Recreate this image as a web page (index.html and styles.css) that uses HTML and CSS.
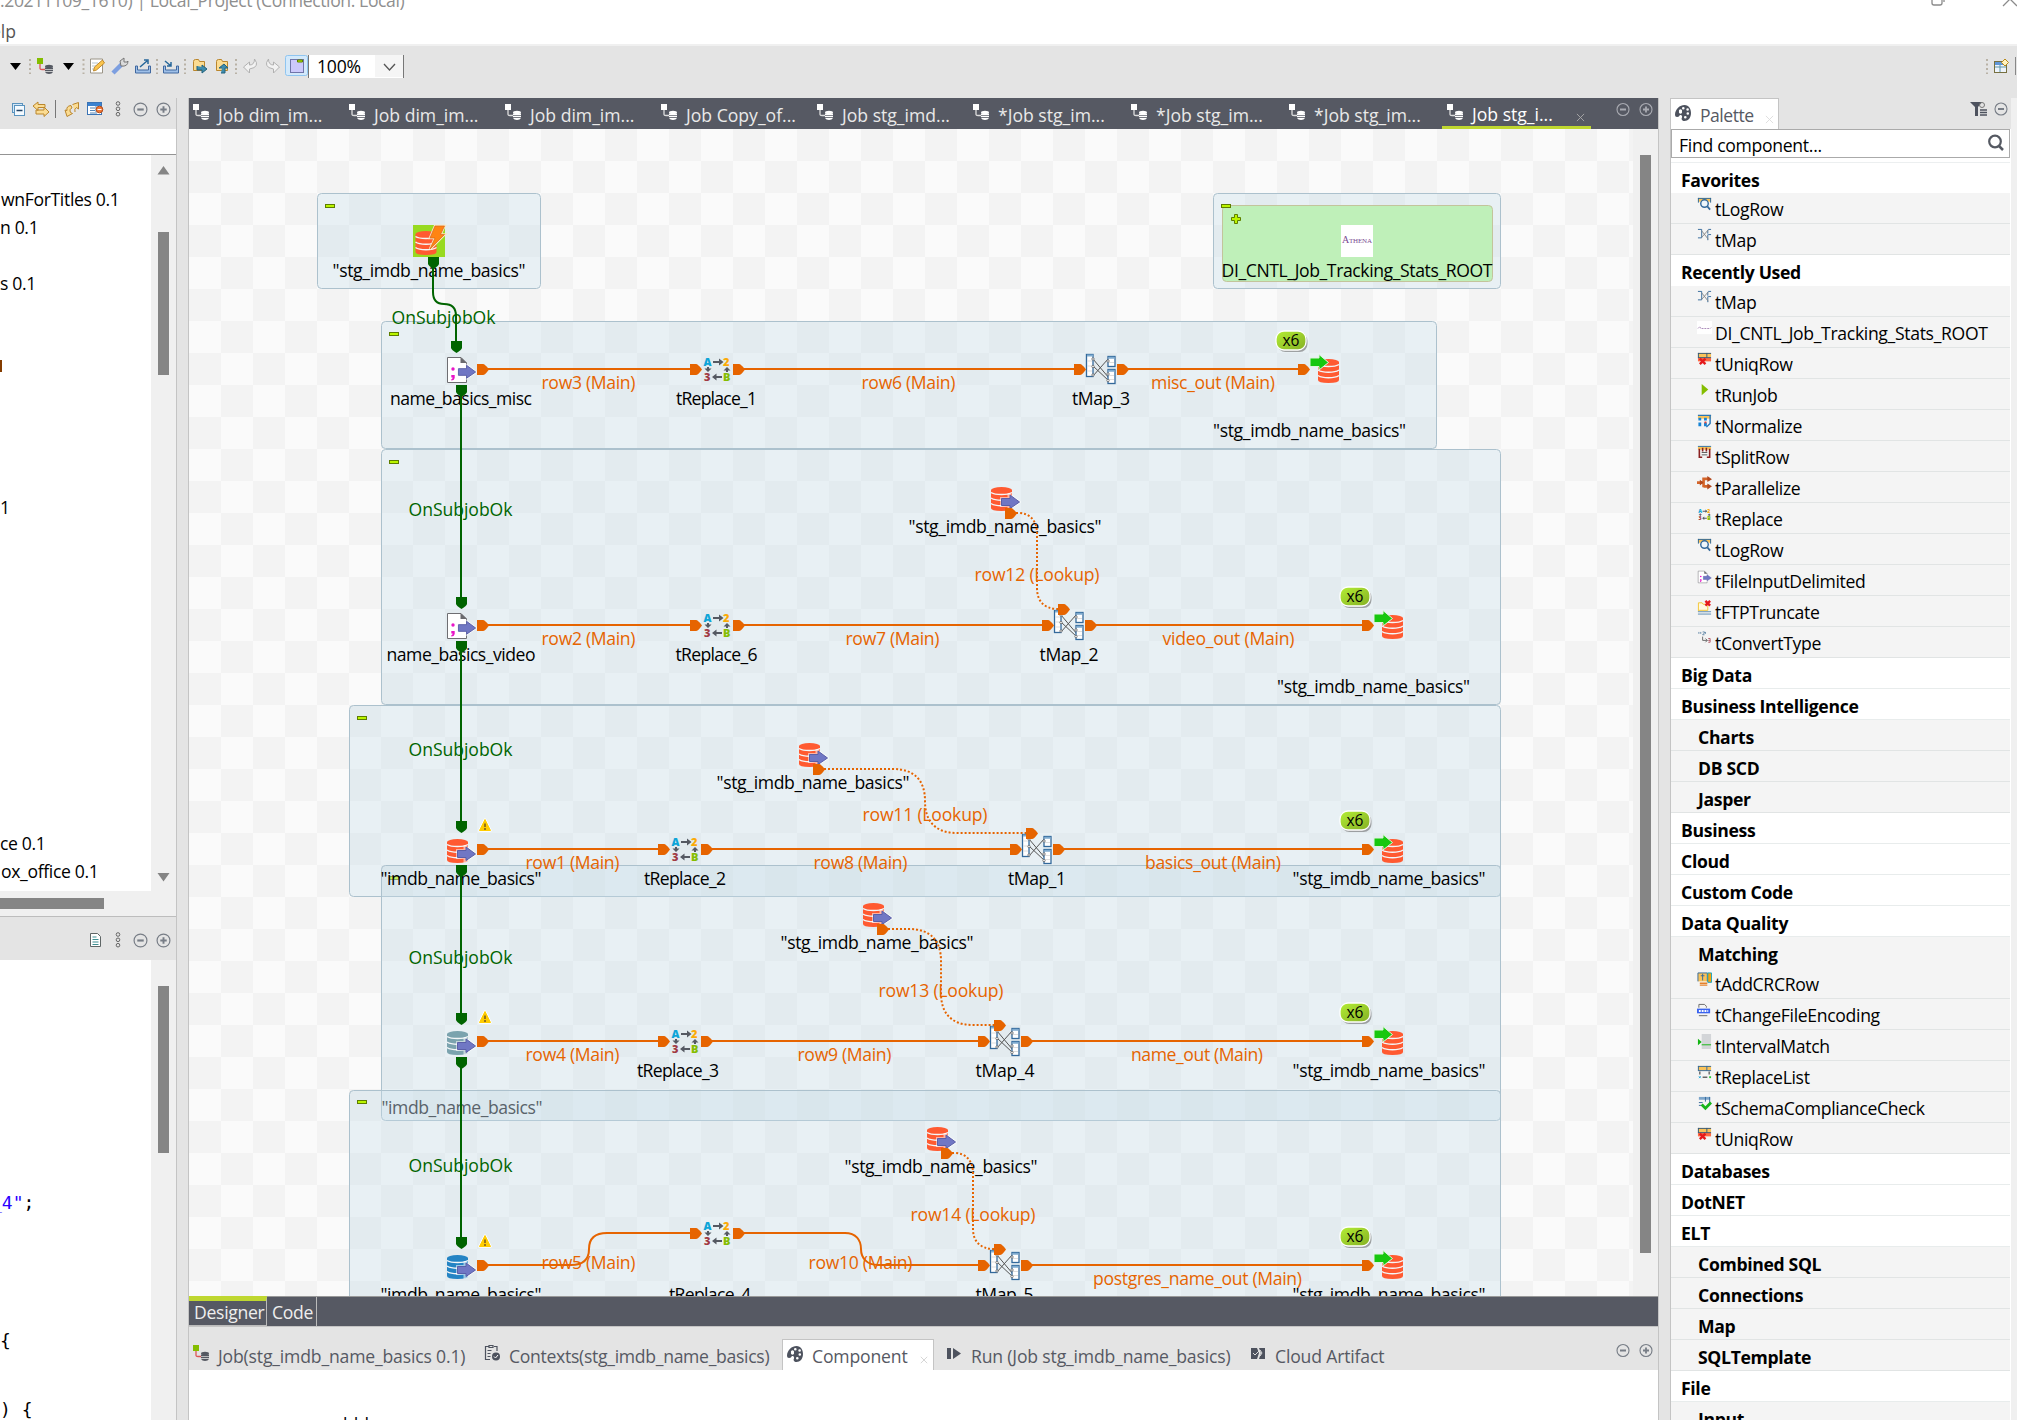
FILE: index.html
```html
<!DOCTYPE html>
<html lang="en">
<head>
<meta charset="utf-8">
<title>Local_Project</title>
<link rel="stylesheet" href="styles.css">
</head>
<body>
<svg class="defs" width="0" height="0">
<defs>
<linearGradient id="badge-fill" x1="0" y1="0" x2="1" y2="1"><stop offset="0" stop-color="#b4ee35"/><stop offset="1" stop-color="#84b024"/></linearGradient>
<symbol id="job" viewBox="0 0 16 16"><rect class="job-a" x="0" y="0" width="6" height="6"/><path class="job-b" d="M3 6V10.500Q3 11.500 5 11.500H8" fill="none"/><g class="job-c"><ellipse cx="12" cy="8.500" rx="4" ry="1.700"/><rect x="8" y="9.500" width="8" height="1.500"/><rect x="8" y="11.700" width="8" height="1.500"/><path d="M8 14h8q-1 2-4 2t-4-2z"/></g></symbol>
<symbol id="minus" viewBox="0 0 14 14"><circle cx="7" cy="7" r="6" fill="none" stroke="currentColor" stroke-width="1.100"/><path d="M4 7h6" stroke="currentColor" stroke-width="2"/></symbol>
<symbol id="plus" viewBox="0 0 14 14"><circle cx="7" cy="7" r="6" fill="none" stroke="currentColor" stroke-width="1.100"/><path d="M4 7h6M7 4v6" stroke="currentColor" stroke-width="1.800"/></symbol>
<symbol id="dots" viewBox="0 0 6 16"><g fill="none" stroke="#666" stroke-width="1"><circle cx="3" cy="2.500" r="1.800"/><circle cx="3" cy="7.800" r="1.800"/><circle cx="3" cy="13.200" r="1.800"/></g></symbol>
<symbol id="palette" viewBox="0 0 16 16"><path fill="#4d525e" fill-rule="evenodd" d="M0 10C0 4 5 0 9.500 0 14 0 16 4 16 8c0 5-3 8-6.500 8C7 16 6 14 7 12.500 7.500 11 6.500 9.500 5 10c-1 1-1 2-3 2Q0 12 0 10zM4 6.500a1.600 1.600 0 1 0 3 0 1.600 1.600 0 1 0-3 0M7 3.200a1.300 1.300 0 1 0 2.600 0 1.300 1.300 0 1 0-2.600 0M11.300 4.500a1.300 1.300 0 1 0 2.600 0 1.300 1.300 0 1 0-2.600 0M11.500 8.500a1.300 1.300 0 1 0 2.600 0 1.300 1.300 0 1 0-2.600 0M9 12.200a1.300 1.300 0 1 0 2.600 0 1.300 1.300 0 1 0-2.600 0"/></symbol>
<symbol id="cross" viewBox="0 0 10 10"><path d="M1 1l8 8M9 1l-8 8" stroke="currentColor" fill="none"/></symbol>
<symbol id="cyl" viewBox="0 0 21 24"><path fill="currentColor" d="M0 3v18q0 3 10.500 3T21 21V3z"/><ellipse cx="10.500" cy="3" rx="10.500" ry="3" fill="currentColor"/><path d="M0 5.500q3 2 10.500 2T21 5.500M0 11q3 2.300 10.500 2.300T21 11M0 16.500q3 2.300 10.500 2.300T21 16.500" fill="none" stroke="#f4f6f8" stroke-width="1.400"/></symbol>
<symbol id="in-arrow" viewBox="0 0 22 18"><path d="M1.500 5.500H9V1.500L19.500 9 9 16V12.500H1.500z" fill="none" stroke="#fff" stroke-opacity=".55" stroke-width="3"/><path d="M1.500 5.500H10V2L19.500 9 10 15.500V12.500H1.500z" fill="#7077c4" stroke="#5a5fa8"/></symbol>
<symbol id="db-in" viewBox="0 0 32 32"><use href="#cyl" x="2" y="6" width="21" height="24"/><use href="#in-arrow" x="11" y="12" width="22" height="18"/></symbol>
<symbol id="file-in" viewBox="0 0 32 32"><path d="M2.500 4.500H16L21.500 10V29.500H2.500z" fill="#fff" stroke="#6e6e72"/><path d="M15.500 4v6H22z" fill="#6a6a6e"/><circle cx="8" cy="16" r="1.700" fill="#e815c8"/><path d="M6.300 22h3.400v3q-.5 2.500-3.400 2.500v-1.200q1.300-.3 1.300-1.800H6.300z" fill="#e815c8"/><use href="#in-arrow" x="12" y="10" width="21" height="18"/></symbol>
<symbol id="db-out" viewBox="0 0 32 32"><g color="#ff5a31"><use href="#cyl" x="9" y="6" width="21" height="24"/></g><path d="M1 5h9V1.500L19.500 9.500 10 17v-3.500H1z" fill="#17c70f" stroke="#dff5dd" stroke-width="1"/></symbol>
<symbol id="replace" viewBox="0 0 32 32"><g font-family="Open Sans,sans-serif" font-weight="800" font-size="11"><text x="2.500" y="12.500" fill="#0ea5d8">A</text><text x="22" y="12.500" fill="#fbaa06">2</text><text x="3" y="28" fill="#a13a44">3</text><text x="22" y="28" fill="#84bd00">B</text></g><g fill="#555962"><path d="M12 8h6V5.500l4.500 3.500-4.500 3.500V10h-6zM21 23h-5.500v-2.500L11 24l4.500 3.500V25H21zM6 14h2v1.500h2.500L7 19l-3.500-3.500H6zM25 19h2v-1.500h2.500L26 14l-3.500 3.500H25z"/></g></symbol>
<symbol id="map" viewBox="0 0 32 32"><path d="M8 6L24 25M8 13L24 28M8 23L23 6" stroke="#555" fill="none"/><g fill="#fff" stroke="#33699b" stroke-width="1.300"><rect x="1.500" y="1.500" width="6.500" height="22"/><rect x="23" y="3.500" width="7" height="10"/><rect x="23" y="16.500" width="7" height="14"/></g><path d="M2 2.500h6M23.500 4.800h6M23.500 17.800h6" stroke="#7eabd0" stroke-width="2"/><path d="M2 8h5M2 13h5M2 18h5M24 9.500h5M24 22.500h5M24 26.500h5" stroke="#ddd"/><g fill="#fff" stroke="#666" stroke-width=".8"><circle cx="8" cy="6" r="1.200"/><circle cx="8" cy="13.500" r="1.200"/><circle cx="8" cy="22" r="1.200"/><circle cx="23" cy="8" r="1.200"/><circle cx="23" cy="21" r="1.200"/><circle cx="23" cy="27.500" r="1.200"/></g></symbol>
<symbol id="warn" viewBox="0 0 14 14"><path d="M7 1.500L12.500 12.500H1.500z" fill="#fc0" stroke="#fff" stroke-width="2.500" stroke-linejoin="round"/><path d="M7 1.500L12.500 12.500H1.500z" fill="#fc0" stroke="#fc0" stroke-linejoin="round"/><path d="M7 5.500v3.500M7 10v2" stroke="#8a6a1c" stroke-width="1.800"/></symbol>
<symbol id="fold" viewBox="0 0 10 4"><rect x=".5" y=".5" width="9" height="3" fill="#baf500" stroke="#5e7d00"/></symbol>
<path id="tip" d="M0-5H6Q8-5 12 .5 8 6 6 6H0z" fill="#e66400"/>
<path id="gtip" d="M-5.500 0H5.500V7Q5 9 0 12-5 9-5.500 7z" fill="#006400"/>
<symbol id="badge" viewBox="0 0 34 24"><rect x="2.500" y="3" width="30" height="19" rx="8" fill="#777" opacity=".65"/><rect x="1" y="1" width="30" height="19" rx="8" fill="url(#badge-fill)" stroke="#fff" stroke-width="1.300"/><text x="16" y="16" text-anchor="middle" textLength="17" lengthAdjust="spacingAndGlyphs" font-family="Open Sans,sans-serif" font-size="17">x6</text></symbol>
<symbol id="i-log" viewBox="0 0 16 16"><path d="M1 1h14v4H1z" fill="#fac35a"/><path d="M1 1.500h14M1.500 1v5M14.500 1v5" stroke="#2b669a" fill="none"/><circle cx="8" cy="7" r="4" fill="#eef6fb" stroke="#33699b" stroke-width="1.500"/><path d="M11 10l3 3.500" stroke="#33699b" stroke-width="1.800"/></symbol>
<symbol id="i-map" viewBox="0 0 16 16"><path d="M1 1.500h4v9H1M12 1.500h3M12 7h3M11.500 2v4M11.500 7v6" stroke="#33699b" fill="none"/><path d="M5 3l7 9M5 10l7-8" stroke="#888" fill="none"/></symbol>
<symbol id="i-athena" viewBox="0 0 16 16"><path d="M0 0h16v14H0z" fill="#fff"/><path d="M1 8l2-2 1 2h10l1-1" fill="none" stroke="#a886b6" stroke-dasharray="2 1"/></symbol>
<symbol id="i-uniq" viewBox="0 0 16 16"><path d="M1 1h14v5H1z" fill="#fac35a"/><path d="M1 6h14v4H1z" fill="#ff6a42"/><path d="M1 1.500h14M1 6h14M1.500 1v5M10.500 1v5" stroke="#33597a" fill="none"/><path d="M3 7l6 6M9 7l-6 6" stroke="#e5191c" stroke-width="2.500"/></symbol>
<symbol id="i-run" viewBox="0 0 16 16"><path d="M5 1l7 6-7 6z" fill="#84bd00"/></symbol>
<symbol id="i-norm" viewBox="0 0 16 16"><path d="M1 1h14v4H1z" fill="#fac35a"/><path d="M1 1.500h14M14 2v8l-4 4" stroke="#2776b8" stroke-width="1.500" fill="none"/><path d="M3 4v3M3 9v4M9 4v3M9 9v4" stroke="#1583d5" stroke-width="3"/><path d="M8 8h2v2H8z" fill="#e43"/></symbol>
<symbol id="i-split" viewBox="0 0 16 16"><path d="M1 1h14v4H1z" fill="#fac35a"/><path d="M1 1.500h14" stroke="#2776b8"/><path d="M2.500 4v9h3M13.500 4v9h-3M6 3v4M10 3v4" stroke="#8a2020" stroke-width="1.700" fill="none"/><path d="M5 8h6M5 10.500h6" stroke="#555"/></symbol>
<symbol id="i-par" viewBox="0 0 16 16"><path d="M0 7h7M7 12V3h6M7 11h6" stroke="#d4652a" stroke-width="2.800" fill="none"/><path d="M11 0l5 3.500-5 3zM11 8l5 3-5 3.500zM3 4l4 3-4 3z" fill="#b3481c"/></symbol>
<symbol id="i-ftp" viewBox="0 0 16 16"><path d="M1.500 12V3h4l1 1.500h5V11H2" fill="#fff8df" stroke="#f3c532"/><path d="M1 12.500h14M1 15h14" stroke="#5b8ab0"/><path d="M9 1l5 5M14 1l-5 5" stroke="#e5191c" stroke-width="2.500"/></symbol>
<symbol id="i-conv" viewBox="0 0 16 16"><path d="M2 1v2M4 1v2M9 1v2M6 1h2v1L6 4h2" stroke="#6287a8" fill="none"/><path d="M6 6v4h5M9 8l2 2-2 2" stroke="#666" fill="none"/><path d="M12 8h2v4h-2M12 10h2" stroke="#b35a66" fill="none"/></symbol>
<symbol id="i-crc" viewBox="0 0 16 16"><path d="M1 1h11v9H1z" fill="#fac35a"/><path d="M1 10V1h10v9M6 2v7M4 4h4" stroke="#33699b" fill="none"/><path d="M11.500 1h4v10h-4z" fill="#f9a30a" stroke="#11a2c4"/><path d="M3 12h8M3 14h8" stroke="#e6822a" stroke-width="1.500"/></symbol>
<symbol id="i-enc" viewBox="0 0 16 16"><path d="M2 5V1.500h6l2 2V5M2 13.500h9" fill="none" stroke="#666"/><path d="M0 6h14v5H0z" fill="#3a63f0"/><path d="M2 8.500h10" stroke="#fff" stroke-width="2" stroke-dasharray="2 1"/></symbol>
<symbol id="i-int" viewBox="0 0 16 16"><path d="M5 0h10v16H5z" fill="#d3d5d8"/><path d="M1 5l4 3.500L1 12z" fill="#12b512"/><path d="M5 11.500h10" stroke="#12b512"/></symbol>
<symbol id="i-rl" viewBox="0 0 16 16"><path d="M1 1h14v5H1z" fill="#fac35a"/><path d="M1 1.500h14M1 6h14M1.500 1v5M10.500 1v5" stroke="#33699b" fill="none"/><path d="M3 7v3M13 7v3M6 13h5" stroke="#666" stroke-width="1.500"/><path d="M2 12l2 2M4 12l-2 2" stroke="#21a5d5"/><path d="M13 13h2" stroke="#2c3" stroke-width="2"/></symbol>
<symbol id="i-schema" viewBox="0 0 16 16"><path d="M2 1h12v3H2z" fill="#7ca5ca"/><path d="M2 10h5M13.500 1v9M9 1v5M2 7h4" stroke="#33699b" fill="none"/><path d="M5 9l4 4 6-6" stroke="#17b51b" stroke-width="3" fill="none"/></symbol>
</defs>
</svg>

<div class="ide">
<header class="window">
  <div class="title">.20211109_1610) | Local_Project (Connection: Local)</div>
  <div class="menu"><span>Help</span></div>
  <svg class="winbtns" width="90" height="8" viewBox="0 0 90 8"><path d="M5 0v3q0 2 2 2h6q2 0 2-2V0M17 0v2" fill="none" stroke="#8b8b8b" stroke-width="1.300"/><path d="M76 6l7-7 7 7" fill="none" stroke="#8b8b8b" stroke-width="1.300"/></svg>
</header>

<div class="toolbar">
  <svg width="308" height="24" viewBox="0 54 308 24">
    <path d="M10 63h11l-5.500 7zM63 63h11l-5.500 7z"/>
    <path d="M30 59v15M83.500 59v15M157 59v15M185 59v15M236 59v15" stroke="#b9b2a6" stroke-width="2" stroke-dasharray="2 2.500"/>
    <use class="job-color" href="#job" x="37" y="58" width="16" height="16"/>
    <path d="M90.500 59h12v14h-12z" fill="#fff" stroke="#9a9487"/><path d="M92 63h6M92 66h5M92 69h3" stroke="#b5c5d0"/><path d="M93.500 71l1-4 8-7 2 3-8 7z" fill="#fbc54c" stroke="#c08a2e"/>
    <path d="M113 73l9-9" stroke="#7d9fe0" stroke-width="4.500"/><path d="M121 66l-1-5 4-3v4h3l1-1q0 6-7 5z" fill="#dadada" stroke="#777"/>
    <g fill="#9fc0e8" stroke="#4068a0"><path d="M135.500 66v7h15v-7h-2v4h-11v-4z"/><path d="M163.500 66v7h15v-7h-2v4h-11v-4z"/></g><path d="M140 67l7-6M144 60h4v4M165 61l6 5M171 62v4h-4" stroke="#27679a" stroke-width="1.500" fill="none"/>
    <g fill="#fbdc92" stroke="#ba862d"><path d="M193.500 61.500q0-2 2-2h3l1 2h5v9h-11z"/><path d="M216.500 61.500q0-2 2-2h3l1 2h5v9h-11z"/></g><path d="M197 66v4h5v3l5-4-5-4v2" fill="#3e8cad" stroke="#23637e"/><path d="M221 73h4v-5h3l-4-4-5 4h3" fill="#3e8cad" stroke="#23637e"/>
    <g fill="#f2f2f2" stroke="#b1b1b1"><path d="M243.500 67l6-5v3q5 0 5-6 6 8-5 10v4z"/><path d="M279.500 67l-6-5v3q-5 0-5-6-6 8 5 10v4z"/></g>
    <rect x="285.500" y="55.500" width="22" height="20" rx="2" fill="#d3e9fb" stroke="#8fc5f0"/><rect x="290.500" y="59.500" width="13" height="13" fill="#ccc9fb" stroke="#7075a8"/><path d="M297.500 60h5v2h-5z" fill="#baf500" stroke="#5e7d00"/>
  </svg>
  <div class="zoom"><span>100%</span><svg width="28" height="22" viewBox="0 0 28 22"><path d="M9 9l5.500 6 5.500-6" fill="none" stroke="#555" stroke-width="1.300"/></svg></div>
  <svg class="persp" width="36" height="24" viewBox="0 54 36 24"><path d="M5 59v15" stroke="#b9b2a6" stroke-width="2" stroke-dasharray="2 2.500"/><rect x="12.500" y="61.500" width="12" height="11" fill="#eef4fc" stroke="#777040"/><path d="M13 62h11v3H13z" fill="#5f96d8"/><path d="M13 67h11M18 65v7" stroke="#5f96a8"/><path d="M23 59l3.500 3.500L23 66l-3.500-3.500z" fill="#fff3c0" stroke="#b88a1c"/><path d="M33.500 57v18" stroke="#888"/></svg>
</div>

<main class="work">
<aside class="left">
  <div class="strip">
    <svg width="176" height="31" viewBox="0 98 176 31"><rect x="12.500" y="103.500" width="10" height="9" fill="#d5e8f8" stroke="#5a93be"/><rect x="14.500" y="105.500" width="10" height="10" fill="#f4faff" stroke="#5a93be"/><path d="M16.500 110.500h6" stroke="#246" stroke-width="1.500"/><path d="M33 106l5-4v2.500h7v3h-7v3zM49 112l-5 4.500v-2.500h-8v-4h8V107z" fill="#fbdc92" stroke="#ba862d"/><path d="M55.500 100v18" stroke="#777"/><path d="M72.500 104.500L78.500 102.500V109L76.500 107.500Q74 109 75 112M71 105.500Q66 106 67 110.500L65 110 67 116.500 72.500 113.500 70.500 112.500Q69 109 72 108z" fill="#fbdc92" stroke="#ba862d"/><rect x="87.500" y="102.500" width="14" height="12" fill="#fff" stroke="#3b74b5"/><path d="M88 104.500h13" stroke="#3b82d0" stroke-width="3"/><path d="M90 108h5M90 110.500h5M90 113h5M96 106v8" stroke="#5585b5"/><circle cx="99.500" cy="109.500" r="3.300" fill="#ef7836" stroke="#b34c1b"/><path d="M97.500 109.500h4" stroke="#fff"/><use href="#dots" x="115" y="101" width="6" height="16"/><g color="#777d86"><use href="#minus" x="133" y="102" width="15" height="15"/><use href="#plus" x="156" y="102" width="15" height="15"/></g></svg>
  </div>
  <div class="filter"></div>
  <div class="tree">
    <ul class="jobs">
      <li class="r1">wnForTitles 0.1</li><li>n 0.1</li><li></li><li>s 0.1</li><li></li><li></li><li class="tick"></li><li></li><li></li><li></li><li></li><li class="one">1</li><li></li><li></li><li></li><li></li><li></li><li></li><li></li><li></li><li></li><li></li><li></li><li>ce 0.1</li><li class="r1">ox_office 0.1</li>
    </ul>
    <svg width="25" height="736" viewBox="151 155 25 736"><path d="M151 155h25v736h-25z" fill="#f0f0f0"/><path d="M158 232h11v143h-11z" fill="#858585"/><path d="M163.500 166l6 8.500h-12zM157.500 873h12l-6 8.500z" fill="#858585"/></svg>
  </div>
  <div class="hscroll"><i></i></div>
  <div class="strip second">
    <svg width="176" height="31" viewBox="0 929 176 31"><path d="M90.500 933.500h7l3 3v10h-10z" fill="#fff" stroke="#5f6666"/><path d="M92.500 937h4M92.500 939.500h6M92.500 942h6M92.500 944.500h6" stroke="#3f8f92"/><use href="#dots" x="115" y="932" width="6" height="16"/><g color="#777d86"><use href="#minus" x="133" y="933" width="15" height="15"/><use href="#plus" x="156" y="933" width="15" height="15"/></g></svg>
  </div>
  <div class="code">
    <pre><b>_4"</b>;





{


) {</pre>
    <div class="vbar"><i></i></div>
  </div>
</aside>

<section class="center">
  <nav class="tabs">
    <div class="tab"><svg><use href="#job"/></svg>Job dim_im...</div>
    <div class="tab"><svg><use href="#job"/></svg>Job dim_im...</div>
    <div class="tab"><svg><use href="#job"/></svg>Job dim_im...</div>
    <div class="tab"><svg><use href="#job"/></svg>Job Copy_of...</div>
    <div class="tab"><svg><use href="#job"/></svg>Job stg_imd...</div>
    <div class="tab wide"><svg><use href="#job"/></svg>*Job stg_im...</div>
    <div class="tab wide"><svg><use href="#job"/></svg>*Job stg_im...</div>
    <div class="tab wide"><svg><use href="#job"/></svg>*Job stg_im...</div>
    <div class="tab active"><svg><use href="#job"/></svg>Job stg_i...<svg class="close"><use href="#cross"/></svg></div>
    <div class="ctl"><svg><use href="#minus"/></svg><svg><use href="#plus"/></svg></div>
  </nav>
  <div class="editor">
  <svg class="canvas" width="1444" height="1167" viewBox="189 129 1444 1167">
    <g class="box">
      <rect x="317.500" y="193.500" width="223" height="95" rx="4"/><rect x="1213.500" y="193.500" width="287" height="95" rx="4"/><rect x="381.500" y="321.500" width="1055" height="127" rx="4"/><rect x="381.500" y="449.500" width="1119" height="255" rx="4"/><rect x="349.500" y="705.500" width="1151" height="191" rx="4"/><rect x="381.500" y="865.500" width="1119" height="255" rx="4"/><rect x="349.500" y="1090.500" width="1151" height="260" rx="4"/>
    </g>
    <rect x="1222.500" y="205.500" width="270" height="76" rx="4" fill="#bff0b9" stroke="#c3c49b"/>
    <use href="#fold" x="325" y="204" width="10" height="4"/><use href="#fold" x="1221" y="204" width="10" height="4"/><use href="#fold" x="389" y="332" width="10" height="4"/><use href="#fold" x="389" y="460" width="10" height="4"/><use href="#fold" x="357" y="716" width="10" height="4"/><use href="#fold" x="389" y="876" width="10" height="4" opacity=".6"/><use href="#fold" x="357" y="1100" width="10" height="4"/>
    <path d="M1234.500 214.500h3v3h3v3h-3v3h-3v-3h-3v-3h3z" fill="#baf500" stroke="#5e7d00"/>

    <g class="lbl">
      <text x="429" y="277" textLength="193">"stg_imdb_name_basics"</text>
      <text x="1357" y="277" textLength="271">DI_CNTL_Job_Tracking_Stats_ROOT</text>
      <text x="461" y="405" textLength="142">name_basics_misc</text><text x="716.500" y="405" textLength="81">tReplace_1</text><text x="1101" y="405" textLength="58">tMap_3</text><text x="1309.500" y="437" textLength="193">"stg_imdb_name_basics"</text>
      <text x="1005" y="533" textLength="193">"stg_imdb_name_basics"</text>
      <text x="461" y="661" textLength="149">name_basics_video</text><text x="716.500" y="661" textLength="82">tReplace_6</text><text x="1069" y="661" textLength="59">tMap_2</text><text x="1373.500" y="693" textLength="193">"stg_imdb_name_basics"</text>
      <text x="813" y="789" textLength="193">"stg_imdb_name_basics"</text>
      <text x="461" y="885" textLength="161">"imdb_name_basics"</text><text x="685" y="885" textLength="82">tReplace_2</text><text x="1037" y="885" textLength="58">tMap_1</text><text x="1389" y="885" textLength="193">"stg_imdb_name_basics"</text>
      <text x="877" y="949" textLength="193">"stg_imdb_name_basics"</text>
      <text x="678" y="1077" textLength="82">tReplace_3</text><text x="1005" y="1077" textLength="59">tMap_4</text><text x="1389" y="1077" textLength="193">"stg_imdb_name_basics"</text>
      <text class="dim" x="462" y="1114" textLength="161">"imdb_name_basics"</text>
      <text x="941" y="1173" textLength="193">"stg_imdb_name_basics"</text>
      <text x="461" y="1301" textLength="161">"imdb_name_basics"</text><text x="710" y="1301" textLength="82">tReplace_4</text><text x="1004.500" y="1301" textLength="58">tMap_5</text><text x="1389" y="1301" textLength="193">"stg_imdb_name_basics"</text>
    </g>
    <g class="lbl or">
      <text x="588.500" y="389" textLength="94">row3 (Main)</text><text x="908.500" y="389" textLength="94">row6 (Main)</text><text x="1213" y="389" textLength="124">misc_out (Main)</text>
      <text x="588.500" y="645" textLength="94">row2 (Main)</text><text x="892.500" y="645" textLength="94">row7 (Main)</text><text x="1228.500" y="645" textLength="132">video_out (Main)</text><text x="1037" y="581" textLength="125">row12 (Lookup)</text>
      <text x="572.500" y="869" textLength="94">row1 (Main)</text><text x="860.500" y="869" textLength="94">row8 (Main)</text><text x="1213" y="869" textLength="136">basics_out (Main)</text><text x="925" y="821" textLength="125">row11 (Lookup)</text>
      <text x="572.500" y="1061" textLength="94">row4 (Main)</text><text x="844.500" y="1061" textLength="94">row9 (Main)</text><text x="1197" y="1061" textLength="132">name_out (Main)</text><text x="941" y="997" textLength="125">row13 (Lookup)</text>
      <text x="588.500" y="1269" textLength="94">row5 (Main)</text><text x="860.500" y="1269" textLength="104">row10 (Main)</text><text x="1197.500" y="1285" textLength="209">postgres_name_out (Main)</text><text x="973" y="1221" textLength="125">row14 (Lookup)</text>
    </g>
    <g class="lbl gr">
      <text x="443.500" y="324" textLength="104">OnSubjobOk</text><text x="460.500" y="516" textLength="104">OnSubjobOk</text><text x="460.500" y="756" textLength="104">OnSubjobOk</text><text x="460.500" y="964" textLength="104">OnSubjobOk</text><text x="460.500" y="1172" textLength="104">OnSubjobOk</text>
    </g>

    <g fill="none" stroke="#e66400" stroke-width="2">
      <path d="M486 369H692M742 369H1076M1126 369H1300M486 625H692M742 625H1044M1094 625H1364M486 849H660M710 849H1012M1062 849H1364M486 1041H660M710 1041H980M1030 1041H1364M1030 1265H1364"/>
      <path d="M486 1265H571C583 1265 589 1259 589 1249S595 1233 607 1233H692M742 1233H845C856 1233 861 1240 861 1249S867 1265 878 1265H980"/>
      <path stroke-dasharray="2 2" d="M1016 513H1018C1030 513 1037 521 1037 533V588C1037 601 1044 609 1058 609M824 769H893C914 769 925 780 925 801S936 833 957 833H1027M888 929H909C930 929 941 940 941 961V993C941 1014 952 1025 973 1025H995M952 1153H954C966 1153 973 1161 973 1173V1229C973 1241 980 1249 994 1249"/>
    </g>
    <g fill="none" stroke="#006400" stroke-width="2"><path d="M433 266V292Q433 304 444 304Q456 304 456 316V343M461 394V600M461 650V824M461 874V1016M461 1066V1240"/></g>

    <rect x="413" y="225" width="32" height="32" fill="#98da20"/><g color="#ff5a31"><use href="#cyl" x="415" y="231" width="22" height="24"/></g><path d="M435 226h9.500l-4 8.500h4L430 249l5-11h-5z" fill="#ff8412" stroke="#fbe6bd" stroke-width="2.500"/><path d="M435 226h9.500l-4 8.500h4L430 249l5-11h-5z" fill="#ff8412" stroke="#d9641c" stroke-width=".7"/>
    <rect x="1341" y="225" width="32" height="32" fill="#fff"/><text class="athena" x="1342" y="243" textLength="30"><tspan class="big">A</tspan>THENA</text>
    <use href="#file-in" x="445" y="353" width="32" height="32"/><use href="#file-in" x="445" y="609" width="32" height="32"/>
    <g color="#ff5a31"><use href="#db-in" x="445" y="833" width="32" height="32"/><use href="#db-in" x="989" y="481" width="32" height="32"/><use href="#db-in" x="797" y="737" width="32" height="32"/><use href="#db-in" x="861" y="897" width="32" height="32"/><use href="#db-in" x="925" y="1121" width="32" height="32"/></g>
    <g color="#7ba3ae"><use href="#db-in" x="445" y="1025" width="32" height="32"/></g><g color="#2484c4"><use href="#db-in" x="445" y="1249" width="32" height="32"/></g>
    <use href="#replace" x="701" y="353" width="32" height="32"/><use href="#replace" x="701" y="609" width="32" height="32"/><use href="#replace" x="669" y="833" width="32" height="32"/><use href="#replace" x="669" y="1025" width="32" height="32"/><use href="#replace" x="701" y="1217" width="32" height="32"/>
    <use href="#map" x="1085" y="353" width="32" height="32"/><use href="#map" x="1053" y="609" width="32" height="32"/><use href="#map" x="1021" y="833" width="32" height="32"/><use href="#map" x="989" y="1025" width="32" height="32"/><use href="#map" x="989" y="1249" width="32" height="32"/>
    <use href="#db-out" x="1309" y="353" width="32" height="32"/><use href="#db-out" x="1373" y="609" width="32" height="32"/><use href="#db-out" x="1373" y="833" width="32" height="32"/><use href="#db-out" x="1373" y="1025" width="32" height="32"/><use href="#db-out" x="1373" y="1249" width="32" height="32"/>
    <use href="#badge" x="1275" y="330" width="34" height="24"/><use href="#badge" x="1339" y="586" width="34" height="24"/><use href="#badge" x="1339" y="810" width="34" height="24"/><use href="#badge" x="1339" y="1002" width="34" height="24"/><use href="#badge" x="1339" y="1226" width="34" height="24"/>
    <use href="#warn" x="478" y="818" width="14" height="14"/><use href="#warn" x="478" y="1010" width="14" height="14"/><use href="#warn" x="478" y="1234" width="14" height="14"/>

    <use href="#tip" x="477" y="369"/><use href="#tip" x="690" y="369"/><use href="#tip" x="733" y="369"/><use href="#tip" x="1074" y="369"/><use href="#tip" x="1117" y="369"/><use href="#tip" x="1298" y="369"/>
    <use href="#tip" x="477" y="625"/><use href="#tip" x="690" y="625"/><use href="#tip" x="733" y="625"/><use href="#tip" x="1042" y="625"/><use href="#tip" x="1085" y="625"/><use href="#tip" x="1362" y="625"/>
    <use href="#tip" x="477" y="849"/><use href="#tip" x="658" y="849"/><use href="#tip" x="701" y="849"/><use href="#tip" x="1010" y="849"/><use href="#tip" x="1053" y="849"/><use href="#tip" x="1362" y="849"/>
    <use href="#tip" x="477" y="1041"/><use href="#tip" x="658" y="1041"/><use href="#tip" x="701" y="1041"/><use href="#tip" x="978" y="1041"/><use href="#tip" x="1021" y="1041"/><use href="#tip" x="1362" y="1041"/>
    <use href="#tip" x="477" y="1265"/><use href="#tip" x="690" y="1233"/><use href="#tip" x="733" y="1233"/><use href="#tip" x="978" y="1265"/><use href="#tip" x="1021" y="1265"/><use href="#tip" x="1362" y="1265"/>
    <use href="#tip" x="1005" y="513"/><use href="#tip" x="1058" y="609"/><use href="#tip" x="813" y="769"/><use href="#tip" x="1026" y="833"/><use href="#tip" x="877" y="929"/><use href="#tip" x="994" y="1025"/><use href="#tip" x="941" y="1153"/><use href="#tip" x="994" y="1249"/>
    <use href="#gtip" x="433.500" y="257"/><use href="#gtip" x="456.500" y="341"/><use href="#gtip" x="461.500" y="385"/><use href="#gtip" x="461.500" y="597"/><use href="#gtip" x="461.500" y="641"/><use href="#gtip" x="461.500" y="821"/><use href="#gtip" x="461.500" y="865"/><use href="#gtip" x="461.500" y="1013"/><use href="#gtip" x="461.500" y="1057"/><use href="#gtip" x="461.500" y="1237"/>
  </svg>
  <div class="edbar"><i></i></div>
  </div>
  <nav class="modes"><span class="on">Designer</span><span>Code</span></nav>
  <nav class="views">
    <div class="v1"><svg class="job-color"><use href="#job"/></svg>Job(stg_imdb_name_basics 0.1)</div>
    <div class="v2"><svg viewBox="0 0 16 16"><path d="M6 14.500H1.500v-13h3M10 1.500h3V6M5 .5h4v2H5zM3.500 5.500h4M3.500 8.500h3M3.500 11.500h3" fill="none" stroke="#4d525e" stroke-width="1.200"/><circle cx="12" cy="11.500" r="4" fill="#4d525e"/><path d="M10 11.500l1.500 1.500 2.500-3" stroke="#fff" fill="none"/></svg>Contexts(stg_imdb_name_basics)</div>
    <div class="v3"><svg><use href="#palette"/></svg>Component<svg class="close"><use href="#cross"/></svg></div>
    <div class="v4"><svg viewBox="0 0 16 16"><path d="M1 3h4v11H1zM7 3l8 5.500L7 14z" fill="#4d525e"/></svg>Run (Job stg_imdb_name_basics)</div>
    <div class="v5"><svg viewBox="0 0 16 16"><path d="M1 3h6l2 5-2 6H1zM9 3h6v11H9l2-6z" fill="#4d525e"/><path d="M3 8l2 2 4-4M10 5l2 3-2 3" fill="none" stroke="#ddd"/></svg>Cloud Artifact</div>
    <div class="ctl"><svg><use href="#minus"/></svg><svg><use href="#plus"/></svg></div>
  </nav>
  <div class="props"><span>ldd</span></div>
</section>

<aside class="right">
  <div class="phead">
    <div class="ptab"><svg class="pi"><use href="#palette"/></svg>Palette<svg class="close"><use href="#cross"/></svg></div>
    <svg class="pctl" width="40" height="18" viewBox="0 0 40 18"><path d="M0 2h12l-4 5v9H5V7z" fill="#4d525e"/><path d="M10 10h7M10 12.500h7M10 15h7" stroke="#4d525e" stroke-width="1.300"/><circle cx="12" cy="5" r="2.500" fill="none" stroke="#777"/><g color="#777d86"><use href="#minus" x="24" y="2" width="14" height="14"/></g></svg>
  </div>
  <div class="find"><span>Find component...</span><svg width="18" height="18" viewBox="0 0 18 18"><circle cx="8" cy="7.500" r="5.800" fill="none" stroke="#555962" stroke-width="2.200"/><path d="M12 12l4 4" stroke="#555962" stroke-width="2.500"/></svg></div>
  <div class="list">
    <div class="h">Favorites</div>
    <div class="c"><svg><use href="#i-log"/></svg>tLogRow</div>
    <div class="c"><svg><use href="#i-map"/></svg>tMap</div>
    <div class="h">Recently Used</div>
    <div class="c"><svg><use href="#i-map"/></svg>tMap</div>
    <div class="c"><svg><use href="#i-athena"/></svg>DI_CNTL_Job_Tracking_Stats_ROOT</div>
    <div class="c"><svg><use href="#i-uniq"/></svg>tUniqRow</div>
    <div class="c"><svg><use href="#i-run"/></svg>tRunJob</div>
    <div class="c"><svg><use href="#i-norm"/></svg>tNormalize</div>
    <div class="c"><svg><use href="#i-split"/></svg>tSplitRow</div>
    <div class="c"><svg><use href="#i-par"/></svg>tParallelize</div>
    <div class="c"><svg><use href="#replace"/></svg>tReplace</div>
    <div class="c"><svg><use href="#i-log"/></svg>tLogRow</div>
    <div class="c"><svg><use href="#file-in"/></svg>tFileInputDelimited</div>
    <div class="c"><svg><use href="#i-ftp"/></svg>tFTPTruncate</div>
    <div class="c"><svg><use href="#i-conv"/></svg>tConvertType</div>
    <div class="h line">Big Data</div>
    <div class="h line">Business Intelligence</div>
    <div class="s">Charts</div>
    <div class="s">DB SCD</div>
    <div class="s">Jasper</div>
    <div class="h line">Business</div>
    <div class="h line">Cloud</div>
    <div class="h line">Custom Code</div>
    <div class="h line">Data Quality</div>
    <div class="s open">Matching</div>
    <div class="c"><svg><use href="#i-crc"/></svg>tAddCRCRow</div>
    <div class="c"><svg><use href="#i-enc"/></svg>tChangeFileEncoding</div>
    <div class="c"><svg><use href="#i-int"/></svg>tIntervalMatch</div>
    <div class="c"><svg><use href="#i-rl"/></svg>tReplaceList</div>
    <div class="c"><svg><use href="#i-schema"/></svg>tSchemaComplianceCheck</div>
    <div class="c"><svg><use href="#i-uniq"/></svg>tUniqRow</div>
    <div class="h line">Databases</div>
    <div class="h line">DotNET</div>
    <div class="h line">ELT</div>
    <div class="s">Combined SQL</div>
    <div class="s">Connections</div>
    <div class="s">Map</div>
    <div class="s">SQLTemplate</div>
    <div class="h line">File</div>
    <div class="s">Input</div>
  </div>
</aside>
</main>
</div>
</body>
</html>
```
FILE: styles.css
```css
* { box-sizing: border-box; }
html, body { margin: 0; height: 100%; overflow: hidden; }
body { font: 17.6px/22px "Open Sans", "Noto Sans", sans-serif; color: #000; background: #e4e4e4; }
.defs { position: absolute; }
svg { display: block; flex: none; }
.ide { width: 2017px; height: 1420px; display: flex; flex-direction: column; overflow: hidden; }

.window { height: 46px; background: #fff; border-bottom: 2px solid #f0f0f0; display: grid; grid-template-columns: 1fr 90px; grid-template-rows: 20px 24px; overflow: hidden; }
.title { color: #8f8f8f; margin-top: -11px; line-height: 22px; white-space: nowrap; letter-spacing: -.4px; }
.menu { grid-row: 2; color: #555; display: flex; justify-content: flex-end; width: 16px; line-height: 22px; }
.winbtns { grid-column: 2; grid-row: 1; }

.toolbar { height: 52px; display: flex; align-items: flex-start; padding-top: 8px; }
.zoom { width: 96px; height: 23px; margin: 1px 0 0; background: #fff; border-left: 1px solid #777; border-right: 1px solid #777; display: flex; justify-content: space-between; padding-left: 8px; line-height: 22px; letter-spacing: -.2px; }
.zoom svg { background: #f5f5f5; }
.persp { margin-left: auto; margin-right: -1px; }

.job-color { --a: #84bd00; --b: #d55; --c: #555962; }
.job-a { fill: var(--a, #fff); }
.job-b { stroke: var(--b, #ddd); stroke-width: 1.3; }
.job-c { fill: var(--c, #fff); }

.work { flex: 1; min-height: 0; display: flex; }
.left { width: 177px; border-right: 1px solid #c4c4c4; display: flex; flex-direction: column; overflow: hidden; flex: none; }
.strip { height: 31px; flex: none; }
.filter { height: 26px; background: #fff; border-bottom: 1px solid #949494; flex: none; }
.tree { height: 736px; display: flex; background: #fff; flex: none; }
.jobs { list-style: none; margin: 0; padding: 30px 0 0; width: 151px; overflow: hidden; letter-spacing: -.35px; white-space: nowrap; }
.jobs li { height: 28px; line-height: 28px; }
.jobs .r1 { padding-left: 1px; }
.jobs .tick { height: 28px; background: linear-gradient(#843c00, #843c00) 0 7px / 2px 12px no-repeat; }
.hscroll { height: 26px; background: #f0f0f0; border-bottom: 1px solid #bdbdbd; padding-top: 7px; flex: none; }
.hscroll i { display: block; width: 104px; height: 11px; background: #858585; }
.second { margin-top: 12px; }
.code { flex: 1; background: #fff; display: flex; }
.code pre { width: 151px; margin: 0; padding: 231px 0 0; text-indent: -9px; font: 18px/23px "DejaVu Sans Mono", monospace; overflow: hidden; }
.code b { color: #2a00ff; font-weight: 400; }
.vbar { width: 25px; background: #f0f0f0; padding: 26px 0 0 7px; }
.vbar i { display: block; width: 11px; height: 167px; background: #858585; }

.center { width: 1471px; margin-left: 11px; border-left: 1px solid #c4c4c4; border-right: 1px solid #c4c4c4; display: flex; flex-direction: column; flex: none; }
.tabs { height: 31px; background: #565963; display: flex; color: #e9e9e9; }
.tab { width: 156px; display: flex; align-items: center; padding-left: 4px; white-space: nowrap; padding-top: 2px; }
.tab svg { width: 16px; height: 16px; margin: -5px 9px 0 0; }
.tab.wide { width: 158px; }
.tab.active { width: 149px; margin-left: -1px; padding: 4px 0 0 5px; border-bottom: 3px solid #bfd730; color: #fff; }
.tab .close { width: 9px; height: 9px; margin: 6px 6px 0 auto; color: #aaa; }
.ctl { margin-left: auto; display: flex; gap: 9px; padding: 4px 5px 0 0; color: #a9abb2; }
.ctl svg { width: 14px; height: 15px; }
.editor { height: 1167px; display: flex; flex: none; }
.canvas { background: conic-gradient(#f3f3f3 25%, #fafafa 0 50%, #f3f3f3 0 75%, #fafafa 0) 0 0 / 64px 64px; }
.edbar { width: 25px; background: #f0f0f0; padding: 26px 0 0 7px; }
.edbar i { display: block; width: 11px; height: 1098px; background: #858585; }
.box rect { fill: rgba(198, 221, 233, .35); stroke: #acc1cd; }
.lbl text { font: 17.6px "Open Sans", sans-serif; text-anchor: middle; fill: #000; }
.lbl .dim { fill: #59636b; }
.lbl.or text { fill: #e66400; }
.lbl.gr text { fill: #006400; }
.athena { font: 7px "Liberation Serif", serif; fill: #7a4a92; }
.athena .big { font-size: 10px; }

.modes { height: 31px; background: #565963; color: #eee; display: flex; border-bottom: 1px solid #c4c4c4; border-top: 1px solid #999; flex: none; letter-spacing: -.3px; }
.modes span { border-right: 1px solid #bbb; padding: 4px 3px 0 5px; }
.modes .on { margin-top: -1px; border-top: 5px solid #bfd730; padding-top: 0; width: 78px; border-bottom: 1px solid #bbb; }
.views { height: 31px; margin-top: 12px; display: flex; color: #565963; white-space: nowrap; letter-spacing: -.17px; flex: none; }
.views > div { display: flex; align-items: center; padding-left: 4px; padding-top: 2px; }
.views svg { width: 16px; height: 16px; margin: -5px 9px 0 0; }
.views .v1 { width: 291px; }
.views .v2 { width: 302px; letter-spacing: -.3px; }
.views .v3 { width: 152px; background: #fff; border: 1px solid #c4c4c4; border-bottom: 0; }
.views .v4 { width: 304px; padding-left: 12px; }
.views .v5 { padding-left: 12px; }
.views .ctl { color: #777d86; align-items: flex-start; padding: 4px 5px 0 0; }
.views .ctl svg { width: 14px; height: 15px; margin: 0; }
.views .close { width: 8px; height: 8px; margin: 8px 5px 0 auto; color: #ccc; }
.props { flex: 1; background: #fff; padding: 43px 0 0 154px; overflow: hidden; }

.right { width: 347px; margin-left: 11px; border-left: 1px solid #c4c4c4; border-right: 6px solid #f0f0f0; flex: none; overflow: hidden; background: #fff; }
.phead { height: 31px; display: flex; justify-content: space-between; background: #e4e4e4; margin-right: -6px; }
.ptab { width: 108px; background: #fff; border: 1px solid #c4c4c4; border-left: 0; border-bottom: 0; display: flex; align-items: center; padding: 2px 0 0 4px; color: #565963; letter-spacing: -.5px; }
.pi { width: 16px; height: 16px; margin: -4px 9px 0 0; }
.ptab .close { width: 9px; height: 9px; margin: 8px 4px 0 auto; color: #ddd; }
.pctl { margin: 2px 7px 0 0; }
.find { height: 29px; width: 339px; border: 1px solid #aaa; display: flex; justify-content: space-between; padding: 4px 4px 0 7px; line-height: 22px; letter-spacing: -.3px; }
.list { margin-top: 4px; width: 339px; border-top: 1px solid #eceff0; }
.list div { height: 31px; line-height: 31px; white-space: nowrap; background: #f4f4f4; border-bottom: 1px solid #e1e4e4; }
.list .h { background: #fff; padding: 2px 0 0 10px; font-weight: 700; letter-spacing: -.33px; border-color: #fff; }
.list .h:first-child { height: 30px; line-height: 30px; }
.list .line { border-color: #e8ecec; }
.list .s { padding: 2px 0 0 27px; font-weight: 700; letter-spacing: -.33px; }
.list .open { border-color: #f4f4f4; }
.list .c { display: flex; padding: 1px 0 0 26px; letter-spacing: -.33px; }
.c svg { width: 15px; height: 15px; margin: 3px 3px 0 0; }
```
